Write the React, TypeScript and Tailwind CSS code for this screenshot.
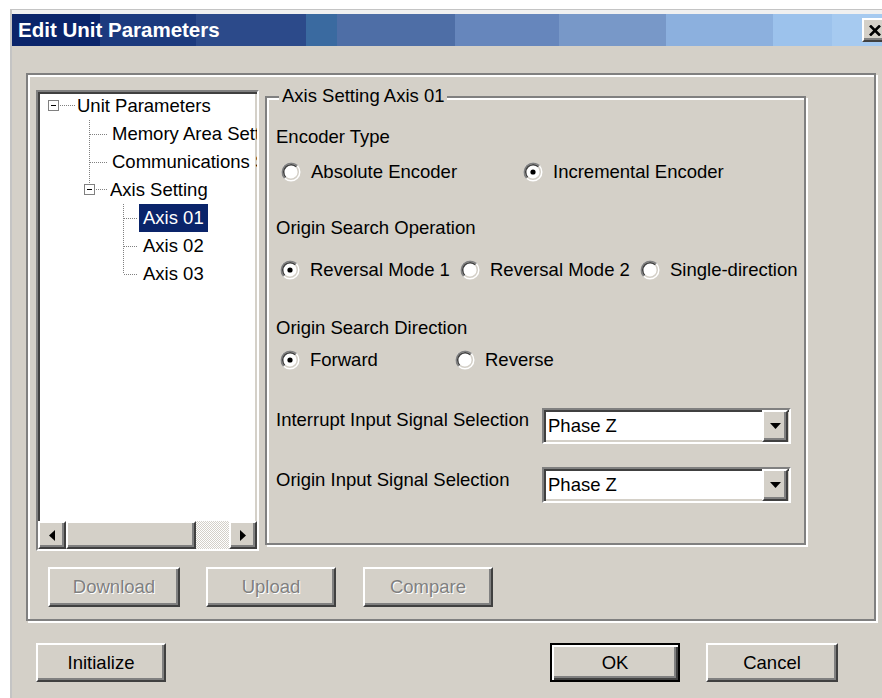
import React from 'react';

// Win2000 style 3D edges
const raised =
  'border-2 border-t-white border-l-white border-r-[#404040] border-b-[#404040] shadow-[inset_-2px_-2px_0_#808080]';
const sunken =
  'border-2 border-t-[#808080] border-l-[#808080] border-r-white border-b-white shadow-[inset_2px_2px_0_#404040,inset_-2px_-2px_0_#d4d0c8]';
const etched = 'border-2 border-[#808080] shadow-[inset_2px_2px_0_#fff,2px_2px_0_#fff]';

const titleBands =
  'bg-[linear-gradient(to_right,#0a246a_0_88px,#1c3a7e_88px_184px,#2c4a8a_184px_294px,#3a6aa0_294px_325px,#4e6ea6_325px_443px,#6686bc_443px_547px,#7898c8_547px_654px,#8cb0de_654px_761px,#9cc2ec_761px_820px,#a6caf0_820px)]';

const Radio = ({ on }: { on?: boolean }) => (
  <svg width="20" height="20" viewBox="0 0 20 20" className="shrink-0">
    <circle cx="10" cy="10" r="9.5" fill="#fff" />
    <path d="M3.64 16.36A9 9 0 0 1 16.36 3.64" fill="none" stroke="#808080" strokeWidth="1.5" />
    <path d="M4.7 15.3A7.5 7.5 0 0 0 15.3 4.7" fill="none" stroke="#d4d0c8" strokeWidth="1.5" />
    <path d="M4.7 15.3A7.5 7.5 0 0 1 15.3 4.7" fill="none" stroke="#404040" strokeWidth="1.5" />
    {on && <circle cx="10" cy="10" r="2.6" fill="#000" />}
  </svg>
);

const Option = ({ label, on, w }: { label: string; on?: boolean; w: string }) => (
  <div className={`flex items-center ${w}`}>
    <Radio on={on} />
    <span className="ml-[10px] whitespace-nowrap">{label}</span>
  </div>
);

const Combo = ({ value }: { value: string }) => (
  <div className={`w-[249px] h-[36px] bg-white flex items-stretch ${sunken}`}>
    <span className="flex-1 pl-[4px] flex items-center">{value}</span>
    <div className={`w-[26px] mr-[1px] bg-[#d4d0c8] flex items-center justify-center ${raised}`}>
      <svg width="11" height="6" viewBox="0 0 11 6">
        <path d="M0 0h11L5.5 6z" fill="#000" />
      </svg>
    </div>
  </div>
);

const Button = ({
  label,
  w,
  disabled,
  primary,
  className = '',
}: {
  label: string;
  w: string;
  disabled?: boolean;
  primary?: boolean;
  className?: string;
}) => (
  <div
    className={`${w} h-full flex items-center justify-center bg-[#d4d0c8] ${
      primary
        ? 'border-2 border-black shadow-[inset_2px_2px_0_#fff,inset_-2px_-2px_0_#404040,inset_-4px_-4px_0_#808080]'
        : raised
    } ${disabled ? 'text-[#808080] [text-shadow:1px_1px_0_#fff]' : ''} ${className}`}
  >
    {label}
  </div>
);

// tree connector art, one per row
const dotted = { stroke: '#808080', strokeWidth: 1, strokeDasharray: '1 1', fill: 'none' } as const;

const MinusBox = ({ x, y }: { x: number; y: number }) => (
  <g>
    <rect x={x + 0.5} y={y + 0.5} width="10" height="10" fill="#fff" stroke="#808080" />
    <line x1={x + 3} y1={y + 5.5} x2={x + 8} y2={y + 5.5} stroke="#000" />
  </g>
);

const TreeRow = ({
  w,
  art,
  label,
  selected,
}: {
  w: number;
  art: React.ReactNode;
  label: string;
  selected?: boolean;
}) => (
  <div className="h-[28px] flex items-stretch whitespace-nowrap overflow-hidden">
    <svg width={w} height="28" className="shrink-0">
      {art}
    </svg>
    <span
      className={`min-w-0 overflow-hidden flex items-center ${
        selected ? 'px-[4px] bg-[#0a246a] text-white' : w > 90 ? 'px-[4px]' : ''
      }`}
    >
      {label}
    </span>
  </div>
);

const Arrow = ({ dir }: { dir: 'left' | 'right' }) => (
  <div className={`w-[28px] bg-[#d4d0c8] flex items-center justify-center ${raised}`}>
    <svg width="6" height="11" viewBox="0 0 6 11">
      <path d={dir === 'left' ? 'M6 0v11L0 5.5z' : 'M0 0v11l6-5.5z'} fill="#000" />
    </svg>
  </div>
);

export default function App() {
  return (
    <div className="w-[882px] h-[698px] overflow-hidden bg-white flex font-['Liberation_Sans',Arial,sans-serif] text-[18.5px] text-black">
      <div className="w-[10px] shrink-0" />

      <div className="w-[882px] shrink-0 mt-[9px] flex flex-col border-t border-l-2 border-[#c4c4c4] bg-[#d4d0c8]">
        <div className="h-[4px] bg-[#f0f0f0]" />

        {/* title bar */}
        <div className={`h-[32px] flex items-center ${titleBands}`}>
          <span className="pl-[6px] flex-1 text-white font-bold text-[20.5px]">Edit Unit Parameters</span>
          <div className={`w-[25px] h-[24px] mr-[5px] bg-[#d4d0c8] flex items-center justify-center ${raised}`}>
            <svg width="12" height="11" viewBox="0 0 12 11">
              <path d="M1 0.5l10 10M11 0.5l-10 10" stroke="#000" strokeWidth="2.6" />
            </svg>
          </div>
        </div>

        <div className="flex-1 px-[14px] pt-[27px]">
          <div className={`w-[850px] h-[548px] flex flex-col pl-[8px] pt-[15px] ${etched}`}>
            <div className="flex items-start">
              {/* tree view */}
              <div className={`w-[223px] h-[461px] bg-white flex flex-col overflow-hidden ${sunken}`}>
                <div className="flex-1 overflow-hidden">
                  <TreeRow
                    w={39}
                    label="Unit Parameters"
                    art={
                      <>
                        <MinusBox x={10} y={8} />
                        <line x1="22" y1="13.5" x2="37" y2="13.5" {...dotted} />
                      </>
                    }
                  />
                  <TreeRow
                    w={74}
                    label="Memory Area Settings"
                    art={
                      <>
                        <line x1="51.5" y1="0" x2="51.5" y2="28" {...dotted} />
                        <line x1="52" y1="14.5" x2="70" y2="14.5" {...dotted} />
                      </>
                    }
                  />
                  <TreeRow
                    w={74}
                    label="Communications Settings"
                    art={
                      <>
                        <line x1="51.5" y1="0" x2="51.5" y2="28" {...dotted} />
                        <line x1="52" y1="14.5" x2="70" y2="14.5" {...dotted} />
                      </>
                    }
                  />
                  <TreeRow
                    w={72}
                    label="Axis Setting"
                    art={
                      <>
                        <line x1="51.5" y1="0" x2="51.5" y2="8" {...dotted} />
                        <MinusBox x={46} y={8} />
                        <line x1="58" y1="13.5" x2="69" y2="13.5" {...dotted} />
                      </>
                    }
                  />
                  <TreeRow
                    w={101}
                    selected
                    label="Axis 01"
                    art={
                      <>
                        <line x1="85.5" y1="0" x2="85.5" y2="28" {...dotted} />
                        <line x1="86" y1="14.5" x2="100" y2="14.5" {...dotted} />
                      </>
                    }
                  />
                  <TreeRow
                    w={101}
                    label="Axis 02"
                    art={
                      <>
                        <line x1="85.5" y1="0" x2="85.5" y2="28" {...dotted} />
                        <line x1="86" y1="14.5" x2="100" y2="14.5" {...dotted} />
                      </>
                    }
                  />
                  <TreeRow
                    w={101}
                    label="Axis 03"
                    art={
                      <>
                        <line x1="85.5" y1="0" x2="85.5" y2="14" {...dotted} />
                        <line x1="86" y1="14.5" x2="100" y2="14.5" {...dotted} />
                      </>
                    }
                  />
                </div>

                {/* horizontal scroll bar */}
                <div className="h-[28px] flex shrink-0">
                  <Arrow dir="left" />
                  <div className={`w-[130px] bg-[#d4d0c8] ${raised}`} />
                  <div className="flex-1 bg-[repeating-conic-gradient(#d4d0c8_0_25%,#ffffff_0_50%)] bg-[length:2px_2px]" />
                  <Arrow dir="right" />
                </div>
              </div>

              {/* axis settings group */}
              <div className={`ml-[6px] mt-[6px] w-[541px] h-[449px] flex flex-col pl-[9px] ${etched}`}>
                <div className="-mt-[13px] ml-[3px] px-[3px] h-[22px] leading-[22px] w-fit bg-[#d4d0c8]">
                  Axis Setting Axis 01
                </div>

                <div className="mt-[19px] h-[22px] leading-[22px]">Encoder Type</div>
                <div className="mt-[13px] h-[22px] ml-[5px] flex items-center">
                  <Option w="w-[242px]" label="Absolute Encoder" />
                  <Option w="w-[240px]" label="Incremental Encoder" on />
                </div>

                <div className="mt-[34px] h-[22px] leading-[22px]">Origin Search Operation</div>
                <div className="mt-[20px] h-[22px] ml-[4px] flex items-center">
                  <Option w="w-[180px]" label="Reversal Mode 1" on />
                  <Option w="w-[180px]" label="Reversal Mode 2" />
                  <Option w="w-[150px]" label="Single-direction" />
                </div>

                <div className="mt-[36px] h-[22px] leading-[22px]">Origin Search Direction</div>
                <div className="mt-[10px] h-[22px] ml-[4px] flex items-center">
                  <Option w="w-[175px]" label="Forward" on />
                  <Option w="w-[175px]" label="Reverse" />
                </div>

                <div className="mt-[37px] flex items-start">
                  <div className="w-[266px] mt-[1px] h-[22px] leading-[22px] whitespace-nowrap">
                    Interrupt Input Signal Selection
                  </div>
                  <Combo value="Phase Z" />
                </div>

                <div className="mt-[23px] flex items-start">
                  <div className="w-[266px] mt-[2px] h-[22px] leading-[22px] whitespace-nowrap">
                    Origin Input Signal Selection
                  </div>
                  <Combo value="Phase Z" />
                </div>
              </div>
            </div>

            <div className="mt-[16px] h-[40px] pl-[12px] flex">
              <Button w="w-[132px]" label="Download" disabled />
              <Button w="w-[130px]" label="Upload" disabled className="ml-[26px]" />
              <Button w="w-[130px]" label="Compare" disabled className="ml-[27px]" />
            </div>
          </div>

          <div className="mt-[22px] h-[39px] flex">
            <Button w="w-[130px]" label="Initialize" className="ml-[10px]" />
            <Button w="w-[130px]" label="OK" primary className="ml-[384px]" />
            <Button w="w-[132px]" label="Cancel" className="ml-[26px]" />
          </div>
        </div>
      </div>
    </div>
  );
}
